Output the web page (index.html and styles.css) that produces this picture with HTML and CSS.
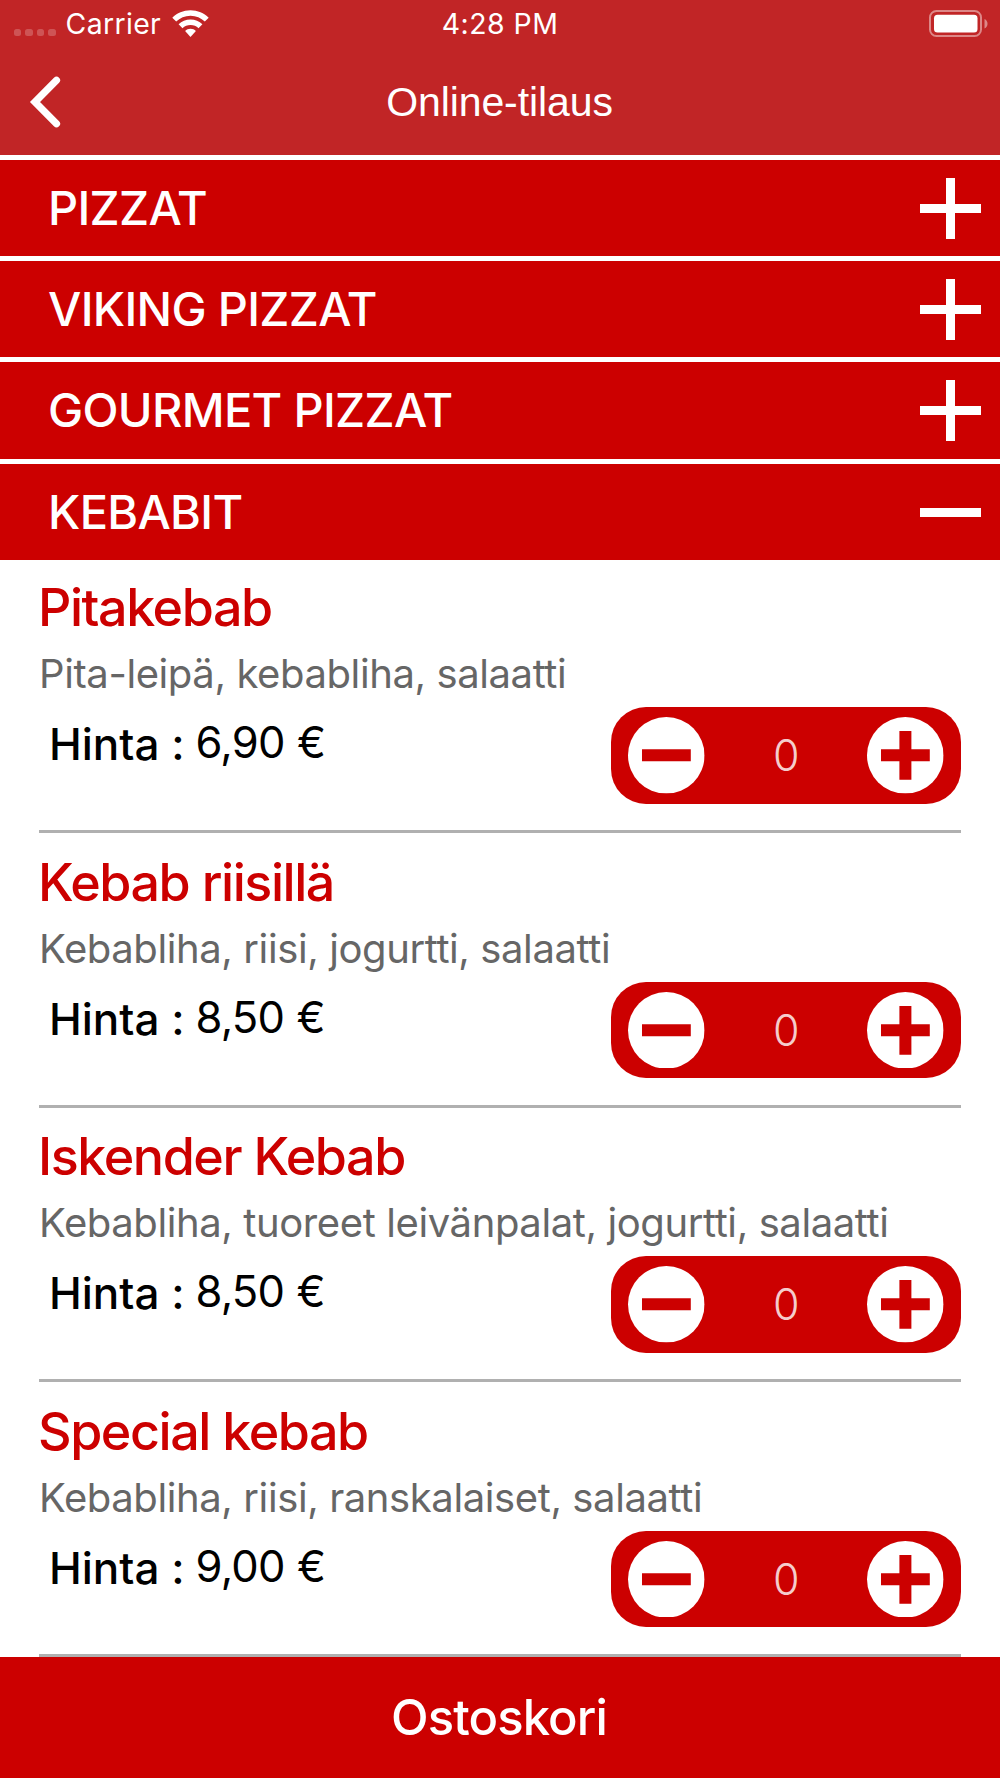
FILE: index.html
```html
<!DOCTYPE html>
<html lang="fi">
<head>
<meta charset="utf-8">
<title>Online-tilaus</title>
<link rel="stylesheet" href="styles.css">
</head>
<body>
<svg width="0" height="0" class="defs">
  <symbol id="plus" viewBox="0 0 61 61"><path d="M26 0h9v26h26v9H35v26h-9V35H0v-9h26z"/></symbol>
  <symbol id="minus" viewBox="0 0 61 61"><path d="M0 26h61v9H0z"/></symbol>
  <symbol id="round-minus" viewBox="0 0 76.6 76.6"><circle cx="38.3" cy="38.3" r="38.3" fill="#fff"/><path fill="#c00" d="M14 32.3h48.8v12H14z"/></symbol>
  <symbol id="round-plus" viewBox="0 0 76.6 76.6"><circle cx="38.3" cy="38.3" r="38.3" fill="#fff"/><path fill="#c00" d="M14 32.3h18.4V14h12v18.3h18.4v12H44.4v18.4h-12V44.3H14z"/></symbol>
</svg>
<div class="app">
  <header class="header">
    <div class="status">
      <div class="status-left">
        <span class="signal"><i></i><i></i><i></i><i></i></span>
        <span class="carrier">Carrier</span>
        <svg class="wifi" width="37" height="28" viewBox="0 0 37 28" fill="#fff"><path d="M18.5 0.3C25.6 0.3 32 3.1 36.7 7.7L32.8 11.6C29.1 8 24.1 5.8 18.5 5.8S7.9 8 4.2 11.6L.3 7.7C5 3.1 11.4.3 18.5.3z"/><path d="M18.5 9.5c4.6 0 8.8 1.8 11.9 4.8l-3.9 3.9c-2.1-2-4.9-3.2-8-3.2s-5.9 1.2-8 3.2l-3.9-3.9c3.1-3 7.3-4.8 11.9-4.8z"/><path d="M18.5 18.7c2.1 0 4 .8 5.4 2.2l-5.4 6-5.4-6c1.4-1.4 3.3-2.2 5.4-2.2z"/></svg>
      </div>
      <span class="time">4:28 PM</span>
      <svg class="battery" width="60" height="28" viewBox="0 0 60 28"><rect x="1" y="1" width="51" height="25" rx="6.5" fill="none" stroke="#fff" stroke-opacity=".45" stroke-width="2"/><rect x="5" y="4.8" width="43.5" height="17.6" rx="3.5" fill="#fff"/><path d="M55.5 9c4 1.5 4 8 0 9.5z" fill="#fff" fill-opacity=".45"/></svg>
    </div>
    <div class="navbar">
      <svg class="back" width="32" height="52" viewBox="0 0 32 52" fill="none" stroke="#fff" stroke-width="7.2" stroke-linecap="round" stroke-linejoin="miter"><path d="M27.5 4.2 6 26l21.5 21.8"/></svg>
      <h1 class="title">Online-tilaus</h1>
    </div>
  </header>
  <main class="menu">
    <section class="category"><h2>PIZZAT</h2><svg class="toggle"><use href="#plus"/></svg></section>
    <section class="category"><h2>VIKING PIZZAT</h2><svg class="toggle"><use href="#plus"/></svg></section>
    <section class="category"><h2>GOURMET PIZZAT</h2><svg class="toggle"><use href="#plus"/></svg></section>
    <section class="category"><h2>KEBABIT</h2><svg class="toggle"><use href="#minus"/></svg></section>
    <div class="items">
      <article class="item"><h3>Pitakebab</h3><p>Pita-leipä, kebabliha, salaatti</p>
        <div class="row"><span class="label">Hinta :</span><span class="price">6,90 €</span><div class="stepper"><svg><use href="#round-minus"/></svg><span>0</span><svg><use href="#round-plus"/></svg></div></div></article>
      <article class="item"><h3>Kebab riisillä</h3><p>Kebabliha, riisi, jogurtti, salaatti</p>
        <div class="row"><span class="label">Hinta :</span><span class="price">8,50 €</span><div class="stepper"><svg><use href="#round-minus"/></svg><span>0</span><svg><use href="#round-plus"/></svg></div></div></article>
      <article class="item"><h3>Iskender Kebab</h3><p>Kebabliha, tuoreet leivänpalat, jogurtti, salaatti</p>
        <div class="row"><span class="label">Hinta :</span><span class="price">8,50 €</span><div class="stepper"><svg><use href="#round-minus"/></svg><span>0</span><svg><use href="#round-plus"/></svg></div></div></article>
      <article class="item"><h3>Special kebab</h3><p>Kebabliha, riisi, ranskalaiset, salaatti</p>
        <div class="row"><span class="label">Hinta :</span><span class="price">9,00 €</span><div class="stepper"><svg><use href="#round-minus"/></svg><span>0</span><svg><use href="#round-plus"/></svg></div></div></article>
    </div>
  </main>
  <footer class="cart">Ostoskori</footer>
</div>
</body>
</html>
```
FILE: styles.css
```css
* { box-sizing: border-box; }
body { margin: 0; background: #fff; font-family: Inter, "Liberation Sans", sans-serif; }
h1, h2, h3, p { margin: 0; white-space: nowrap; }
.defs { display: block; position: absolute; }
.app { width: 1000px; height: 1778px; display: flex; flex-direction: column; overflow: hidden; }

.header { height: 154.5px; flex: none; background: #c12526; color: #fff; }
.status { height: 48px; display: grid; grid-template-columns: 1fr auto 1fr; align-items: center; font-size: 28.4px; line-height: 48px; }
.status-left { display: flex; align-items: center; padding-left: 14px; }
.signal { display: flex; gap: 4px; padding-top: 17px; }
.signal i { width: 7.4px; height: 7.4px; border-radius: 2.5px; background: rgba(255,255,255,.22); }
.carrier { margin-left: 10px; letter-spacing: .35px; }
.wifi { margin-left: 11px; }
.time { letter-spacing: .5px; }
.battery { justify-self: end; margin-right: 11px; }
.navbar { height: 108px; display: grid; grid-template-columns: 1fr auto 1fr; align-items: center; }
.back { margin-left: 29px; }
.title { padding-right: 1px; font: 400 41px/108px "Liberation Sans", Arial, sans-serif; letter-spacing: -.1px; }

.menu { flex: 1; min-height: 0; overflow: hidden; padding-top: 5px; }
.category { height: 96.55px; margin-bottom: 4.8px; background: #c00; color: #fff; display: flex; align-items: center; justify-content: space-between; padding: 0 19px 0 48px; }
.category h2 { font-size: 47px; font-weight: 500; line-height: 96px; letter-spacing: -.68px; }
.category:nth-of-type(4) { margin-bottom: 0; }
.toggle { width: 61px; height: 61px; margin-top: 1px; fill: #fff; }

.item { height: 274.5px; padding: 16px 39px 0; }
.item h3 { margin-left: -1px; font-size: 52px; font-weight: 530; line-height: 64px; letter-spacing: -1.45px; color: #c00; }
.item p { font-size: 40px; line-height: 67px; letter-spacing: -.4px; color: #666; }
.row { display: flex; align-items: flex-start; height: 126px; padding-left: 10px; border-bottom: 3px solid #b0b0b0; color: #000; }
.label { font-size: 44px; font-weight: 500; line-height: 74px; }
.price { font-size: 43.5px; line-height: 71px; margin-left: 11px; letter-spacing: -.8px; word-spacing: 1px; }
.stepper { width: 350px; height: 96.6px; margin-left: auto; border-radius: 35px; background: #c00; display: flex; align-items: center; justify-content: space-between; padding: 0 17.5px 0 17px; color: #f5cccc; font-size: 43px; font-weight: 350; }
.stepper span { padding-left: 1px; }
.stepper svg { width: 76.6px; height: 76.6px; }

.cart { height: 121px; flex: none; padding-right: 2px; background: #c00; color: #fff; text-align: center; font-size: 49px; font-weight: 500; line-height: 121px; letter-spacing: -.9px; }
```
